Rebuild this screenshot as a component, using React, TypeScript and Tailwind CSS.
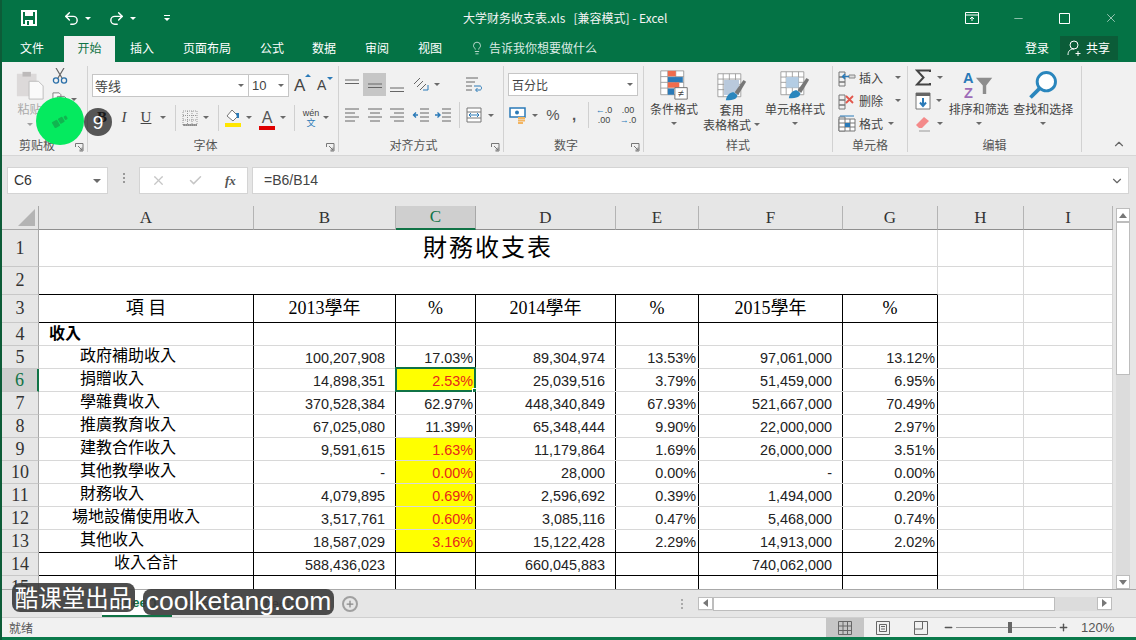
import React from "react"
import { Undo2, Redo2, Lightbulb, Check, X, Minus, Plus, ChevronDown } from "lucide-react"

const rows = [
  { n: 5, a: "政府補助收入", b: "100,207,908", c: "17.03%", d: "89,304,974", e: "13.53%", f: "97,061,000", g: "13.12%" },
  { n: 6, a: "捐贈收入", b: "14,898,351", c: "2.53%", d: "25,039,516", e: "3.79%", f: "51,459,000", g: "6.95%" },
  { n: 7, a: "學雜費收入", b: "370,528,384", c: "62.97%", d: "448,340,849", e: "67.93%", f: "521,667,000", g: "70.49%" },
  { n: 8, a: "推廣教育收入", b: "67,025,080", c: "11.39%", d: "65,348,444", e: "9.90%", f: "22,000,000", g: "2.97%" },
  { n: 9, a: "建教合作收入", b: "9,591,615", c: "1.63%", d: "11,179,864", e: "1.69%", f: "26,000,000", g: "3.51%" },
  { n: 10, a: "其他教學收入", b: "-", c: "0.00%", d: "28,000", e: "0.00%", f: "-", g: "0.00%" },
  { n: 11, a: "財務收入", b: "4,079,895", c: "0.69%", d: "2,596,692", e: "0.39%", f: "1,494,000", g: "0.20%" },
  { n: 12, a: "場地設備使用收入", b: "3,517,761", c: "0.60%", d: "3,085,116", e: "0.47%", f: "5,468,000", g: "0.74%" },
  { n: 13, a: "其他收入", b: "18,587,029", c: "3.16%", d: "15,122,428", e: "2.29%", f: "14,913,000", g: "2.02%" },
]
const yellowRows = [6, 9, 10, 11, 12, 13]
const cols = ["A", "B", "C", "D", "E", "F", "G", "H", "I"]
const gridCols = "grid grid-cols-[37px_215px_142px_80px_140px_83px_144px_95px_86px_89px]"
const cjk = "font-['Liberation_Serif','Noto_Sans_CJK_TC',serif]"

function Caret({ className = "" }: { className?: string }) {
  return <span className={`inline-block h-0 w-0 border-x-[3px] border-t-[3px] border-x-transparent border-t-[#6a6a6a] ${className}`} />
}

function Sep() {
  return <span className="h-[26px] w-px bg-[#d0d0d0]" />
}

function Launcher() {
  return (
    <svg width="9" height="9" viewBox="0 0 9 9" className="absolute right-[3px] top-[8px]">
      <path d="M.5 4V.5H8V8H4.5M3 3l4 4M7 4.5V7H4.5" fill="none" stroke="#777" />
    </svg>
  )
}

function Group({ width, label, launcher, children }: { width: string; label: string; launcher?: boolean; children: React.ReactNode }) {
  return (
    <div className={`flex h-[86px] shrink-0 flex-col border-r border-[#d2d2d2] ${width}`}>
      <div className="h-[69px] shrink-0">{children}</div>
      <div className={`relative flex h-[19px] shrink-0 items-center justify-center text-[12px] text-[#555] ${launcher ? "pr-[15px]" : ""}`}>
        {label}
        {launcher && <Launcher />}
      </div>
    </div>
  )
}

function Lines({ kind }: { kind: "top" | "mid" | "bot" | "left" | "center" | "right" | "out" | "in" }) {
  const d: Record<string, string> = {
    top: "M2 4h14M2 7.5h14",
    mid: "M2 8h14M2 11.5h14",
    bot: "M2 12h14M2 15.5h14",
    left: "M2 3h14M2 7h10M2 11h14M2 15h10",
    center: "M2 3h14M4 7h10M2 11h14M4 15h10",
    right: "M2 3h14M6 7h10M2 11h14M6 15h10",
    out: "M8 3h9M8 7h9M8 11h9M8 15h9",
    in: "M8 3h9M8 7h9M8 11h9M8 15h9",
  }
  return (
    <svg width="18" height="18" viewBox="0 0 18 18">
      <path d={d[kind]} stroke="#666" fill="none" />
      {kind === "out" && <path d="M1 9h5M4 6.5 1.5 9 4 11.5" stroke="#2a7ab8" strokeWidth="1.4" fill="none" />}
      {kind === "in" && <path d="M1 9h5M3.5 6.5 6 9l-2.5 2.5" stroke="#2a7ab8" strokeWidth="1.4" fill="none" />}
    </svg>
  )
}

function MiniTable({ children }: { children?: React.ReactNode }) {
  return (
    <svg width="30" height="30" viewBox="0 0 34 34">
      <path d="M1 2h26v26H1zM1 8h26M1 14h26M1 20h26M7 2v26M14 2v26M21 2v26" stroke="#9a9a9a" fill="#fff" />
      {children}
      <path d="M20 23 30 9l3 2-9 15z" fill="#777" />
      <path d="M10 32c1-6 5-9 9-9l4 3c0 4-3 6-13 6z" fill="#2a86bd" />
    </svg>
  )
}

function CellIcon({ mark }: { mark: "insert" | "delete" | "format" }) {
  return (
    <svg width="18" height="18" viewBox="0 0 18 18">
      <path d="M1 3h6v5H1zM1 8h6v5H1zM1 13h6v4H1z" fill="none" stroke="#777" />
      {mark === "insert" && (
        <>
          <path d="M11 6h6v3h-6z" fill="#ddd" stroke="#888" />
          <path d="M11 7.5H5M7 5 4.5 7.5 7 10" stroke="#2a7ab8" strokeWidth="1.4" fill="none" />
        </>
      )}
      {mark === "delete" && <path d="m8 4 7 7m0-7-7 7" stroke="#e2574c" strokeWidth="1.8" />}
      {mark === "format" && (
        <>
          <path d="M1 5h16v12H1zM7 5v12M12 5v12M1 9h16M1 13h16" fill="#fff" stroke="#777" />
          <path d="M7 9h5v4H7z" fill="#2a7ab8" />
          <path d="M2 2h14" stroke="#2a7ab8" />
        </>
      )}
    </svg>
  )
}

function Ribbon() {
  return (
    <div className="flex h-[94px] bg-[#f1f1f1] pt-[4px] text-[#444] border-b border-[#d6d6d6]">
      <Group width="w-[86px]" label="剪贴板" launcher>
        <div className="flex pt-[4px]">
          <div className="flex w-[48px] flex-col items-center pl-[7px] text-[#aaa]">
            <svg width="30" height="30" viewBox="0 0 32 32">
              <path d="M2 4h21v24H2z" fill="#dcd9d9" />
              <path d="M8 2h9v5H8z" fill="#bdbaba" />
              <path d="M15 12h10l5 5v14H15z" fill="#fafafa" stroke="#bbb" />
            </svg>
            <span className="mt-[1px] text-[12px] leading-[16px]">粘贴</span>
            <Caret className="mt-[6px] opacity-60" />
          </div>
          <div className="-mt-[2px] flex flex-1 flex-col pl-[2px]">
            <svg width="16" height="16" viewBox="0 0 16 16">
              <path d="M4 0l6 10M12 0 6 10" stroke="#666" strokeWidth="1.2" fill="none" />
              <circle cx="4" cy="12.500" r="2.600" fill="none" stroke="#2a6fa8" strokeWidth="1.300" />
              <circle cx="12" cy="12.500" r="2.600" fill="none" stroke="#2a6fa8" strokeWidth="1.300" />
            </svg>
            <div className="mt-[8px] flex items-center gap-[3px]">
              <svg width="16" height="15" viewBox="0 0 18 17">
                <path d="M1 1h7l2 2v10H1zM6 5h8l3 3v8H6z" fill="#fbfbfb" stroke="#777" />
              </svg>
              <Caret />
            </div>
          </div>
        </div>
      </Group>

      <Group width="w-[251px]" label="字体" launcher>
        <div className="flex items-center pl-[4px] pt-[7px]">
          <div className="flex h-[23px] w-[157px] items-center justify-between border border-[#c6c6c6] bg-white pl-[2px] pr-[4px] text-[13px]">
            等线
            <Caret />
          </div>
          <div className="flex h-[23px] w-[40px] items-center justify-between border border-l-0 border-[#c6c6c6] bg-white pl-[3px] pr-[4px] font-['Liberation_Sans'] text-[13px]">
            10
            <Caret />
          </div>
          <span className="relative ml-[5px] w-[22px] font-['Liberation_Sans'] text-[17px]">
            A<span className="absolute left-[11px] top-[1px] h-0 w-0 border-x-[3px] border-b-[3px] border-x-transparent border-b-[#2a7ab8]" />
          </span>
          <span className="relative ml-[1px] w-[20px] font-['Liberation_Sans'] text-[14px]">
            A<span className="absolute left-[10px] top-[2px] h-0 w-0 border-x-[3px] border-t-[3px] border-x-transparent border-t-[#2a7ab8]" />
          </span>
        </div>
        <div className="mt-[7px] flex h-[24px] items-center pl-[3px] font-['Liberation_Serif'] text-[15px]">
          <span className="flex w-[22px] justify-center font-bold text-black">B</span>
          <span className="flex w-[22px] justify-center italic">I</span>
          <span className="flex w-[22px] justify-center underline">U</span>
          <span className="flex w-[12px] justify-center"><Caret /></span>
          <span className="flex w-[12px] justify-center"><Sep /></span>
          <span className="flex w-[18px] justify-center">
            <svg width="16" height="16" viewBox="0 0 16 16">
              <path d="M1 1h14v14H1zM5.500 1v14M10 1v14M1 5.500h14M1 10h14" fill="none" stroke="#999" strokeDasharray="1 1" />
              <path d="M1 15h14" stroke="#555" />
            </svg>
          </span>
          <span className="flex w-[14px] justify-center"><Caret /></span>
          <span className="flex w-[10px] justify-center"><Sep /></span>
          <span className="flex w-[20px] justify-center">
            <svg width="18" height="18" viewBox="0 0 18 18">
              <path d="m8 1 6 6-5 5-6-5z" fill="#fff" stroke="#777" />
              <path d="M12 4h3v5h-2z" fill="#2a7ab8" />
              <path d="M1 14h16v4H1z" fill="#ffe600" />
            </svg>
          </span>
          <span className="flex w-[12px] justify-center"><Caret /></span>
          <span className="flex w-[24px] justify-center">
            <span className="relative font-['Liberation_Sans'] text-[16px] leading-[18px] text-[#555]">
              A<span className="absolute -left-[3px] -right-[3px] bottom-[-3px] h-[4px] bg-[#e00000]" />
            </span>
          </span>
          <span className="flex w-[8px] justify-center"><Caret /></span>
          <span className="flex w-[14px] justify-center"><Sep /></span>
          <span className="flex w-[20px] flex-col items-center font-['Liberation_Sans'] text-[9px] leading-[9px]">
            wén<span className="font-['Noto_Sans_CJK_SC'] text-[#2a7ab8]">文</span>
          </span>
          <span className="flex w-[10px] justify-center"><Caret /></span>
        </div>
      </Group>

      <Group width="w-[165px]" label="对齐方式" launcher>
        <div className="flex items-center pl-[2px] pt-[7px]">
          <span className="flex h-[23px] w-[22px] items-center justify-center"><Lines kind="top" /></span>
          <span className="flex h-[23px] w-[23px] items-center justify-center bg-[#c6c6c6]"><Lines kind="mid" /></span>
          <span className="flex h-[23px] w-[22px] items-center justify-center"><Lines kind="bot" /></span>
          <span className="ml-[2px] flex w-[22px] justify-center">
            <svg width="18" height="18" viewBox="0 0 18 18">
              <path d="m2 8 6-6M5 11l6-6M8 14l6-6" stroke="#666" fill="none" />
              <path d="M11 14h5M16 9v5" stroke="#2a7ab8" fill="none" />
            </svg>
          </span>
          <span className="flex w-[10px] justify-center"><Caret /></span>
          <span className="ml-[22px] flex w-[20px] justify-center">
            <svg width="18" height="18" viewBox="0 0 18 18">
              <path d="M1 2h12M1 6h9M1 10h6M1 14h6" stroke="#666" fill="none" />
              <path d="M9 10h6c2 0 2 4 0 4h-4M12.500 12 10.500 14l2 2" stroke="#2a7ab8" fill="none" />
            </svg>
          </span>
        </div>
        <div className="mt-[7px] flex h-[24px] items-center pl-[2px]">
          <span className="flex w-[22px] justify-center"><Lines kind="left" /></span>
          <span className="flex w-[23px] justify-center"><Lines kind="center" /></span>
          <span className="flex w-[22px] justify-center"><Lines kind="right" /></span>
          <span className="ml-[2px] flex w-[22px] justify-center"><Lines kind="out" /></span>
          <span className="flex w-[22px] justify-center"><Lines kind="in" /></span>
          <span className="flex w-[10px] justify-center"><Sep /></span>
          <span className="flex w-[20px] justify-center">
            <svg width="16" height="16" viewBox="0 0 16 16">
              <path d="M1 1h14v14H1zM1 5h14M1 11h14" fill="#fff" stroke="#777" />
              <path d="M3 8h10M5 6 3 8l2 2M11 6l2 2-2 2" stroke="#2a7ab8" fill="none" />
            </svg>
          </span>
          <span className="flex w-[14px] justify-center"><Caret /></span>
        </div>
      </Group>

      <Group width="w-[140px]" label="数字" launcher>
        <div className="pl-[4px] pt-[7px]">
          <div className="flex h-[23px] w-[130px] items-center justify-between border border-[#c6c6c6] bg-white pl-[3px] pr-[4px] text-[12px]">
            百分比
            <Caret />
          </div>
        </div>
        <div className="mt-[7px] flex h-[24px] items-center pl-[5px] font-['Liberation_Sans']">
          <span className="flex w-[18px] justify-center">
            <svg width="18" height="18" viewBox="0 0 18 18">
              <path d="M1 2h15v9H1z" fill="#fff" stroke="#2a7ab8" strokeWidth="1.5" />
              <circle cx="8" cy="6.500" r="2" fill="#2a7ab8" />
              <path d="M9 12h7M9 14.500h7M9 17h5" stroke="#f3b562" strokeWidth="2" />
            </svg>
          </span>
          <span className="flex w-[16px] justify-center"><Caret /></span>
          <span className="flex w-[20px] justify-center text-[15px] text-[#555]">%</span>
          <span className="flex w-[22px] justify-center text-[15px] font-bold text-[#555]">,</span>
          <span className="flex w-[6px] justify-center"><Sep /></span>
          <span className="flex w-[26px] flex-col items-center text-[9px] leading-[10px]">
            <span><span className="text-[#2a7ab8]">←</span>.0</span>.00
          </span>
          <span className="flex w-[22px] flex-col items-center text-[9px] leading-[10px]">
            .00<span><span className="text-[#2a7ab8]">→</span>.0</span>
          </span>
        </div>
      </Group>

      <Group width="w-[189px]" label="样式">
        <div className="flex text-[12px] leading-[15px]">
          <div className="flex w-[60px] flex-col items-center pt-[4px]">
            <svg width="30" height="30" viewBox="0 0 32 34">
              <path d="M1 1h26v27H1zM1 7.500h26M1 14h26M1 20.500h26M9 1v27M18 1v27" fill="#fff" stroke="#999" />
              <path d="M9 1h9v6H9z" fill="#ef6c4d" />
              <path d="M9 8h17v6H9z" fill="#2a7ab8" />
              <path d="M9 14h13v6H9z" fill="#ef6c4d" />
              <path d="M9 21h7v7H9z" fill="#2a7ab8" />
              <path d="M17 20h14v13H17z" fill="#fff" stroke="#666" />
              <text x="24" y="31" textAnchor="middle" fontSize="12" fill="#444" fontFamily="Liberation Sans">≠</text>
            </svg>
            <span className="mt-[1px]">条件格式</span>
            <Caret className="mt-[6px]" />
          </div>
          <div className="flex w-[55px] flex-col items-center pt-[6px]">
            <MiniTable><path d="M8 9h17v17H8z" fill="#b9c9dc" /></MiniTable>
            <span>套用</span>
            <span className="flex items-center gap-[3px] whitespace-nowrap">表格格式<Caret /></span>
          </div>
          <div className="flex w-[72px] flex-col items-center pt-[4px]">
            <MiniTable><path d="M7 8h14v12H7z" fill="#b4cde4" /></MiniTable>
            <span className="mt-[1px] whitespace-nowrap">单元格样式</span>
            <Caret className="mt-[6px]" />
          </div>
        </div>
      </Group>

      <Group width="w-[75px]" label="单元格">
        <div className="flex flex-col pl-[5px] text-[12px] leading-[23px]">
          <div className="flex h-[23px] items-center gap-[3px]"><CellIcon mark="insert" />插入<Caret className="ml-[9px]" /></div>
          <div className="flex h-[23px] items-center gap-[3px]"><CellIcon mark="delete" />删除<Caret className="ml-[9px]" /></div>
          <div className="flex h-[22px] items-center gap-[3px]"><CellIcon mark="format" />格式<Caret className="ml-[2px]" /></div>
        </div>
      </Group>

      <Group width="w-[174px]" label="编辑">
        <div className="flex text-[12px] leading-[15px]">
          <div className="flex w-[44px] flex-col items-start pl-[7px]">
            <div className="flex h-[23px] items-center gap-[5px]">
              <svg width="17" height="17" viewBox="0 0 17 17"><path d="M15 3V1.500H2L8.500 8.500 2 15.500h13V14" fill="none" stroke="#444" strokeWidth="2" /></svg>
              <Caret />
            </div>
            <div className="flex h-[23px] items-center gap-[5px]">
              <svg width="16" height="18" viewBox="0 0 16 18"><path d="M1 1h14v16H1z" fill="#fff" stroke="#777" /><path d="M1 1h14v3H1z" fill="#666" /><path d="M8 6v8M5 10.500 8 14l3-3.500" stroke="#2a7ab8" strokeWidth="2" fill="none" /></svg>
              <Caret />
            </div>
            <div className="flex h-[23px] items-center gap-[5px]">
              <svg width="17" height="17" viewBox="0 0 17 17"><path d="m1 10 8-8 5 4-7 7H4z" fill="#f48a8a" /><path d="M4 16h11" stroke="#999" /></svg>
              <Caret />
            </div>
          </div>
          <div className="flex w-[54px] flex-col items-center pt-[4px]">
            <svg width="31" height="30" viewBox="0 0 36 35" fontFamily="Liberation Sans" fontWeight="bold" fontSize="17">
              <text x="0" y="15" fill="#2a7ab8">A</text>
              <text x="1" y="33" fill="#9d6cb8">Z</text>
              <path d="M15 9h19l-7 9v10h-4V18z" fill="#8d8d8d" />
            </svg>
            <span className="mt-[1px] whitespace-nowrap">排序和筛选</span>
            <Caret className="mt-[6px]" />
          </div>
          <div className="flex w-[76px] flex-col items-center pt-[4px]">
            <svg width="30" height="30" viewBox="0 0 36 36">
              <circle cx="22" cy="14" r="11" fill="#fff" stroke="#2a86bd" strokeWidth="3.500" />
              <path d="m14 22-11 11" stroke="#2a86bd" strokeWidth="4.500" />
            </svg>
            <span className="mt-[1px] whitespace-nowrap">查找和选择</span>
            <Caret className="mt-[6px]" />
          </div>
        </div>
      </Group>

      <div className="flex flex-1 items-end justify-end pb-[4px] pr-[10px]">
        <ChevronDown size={14} strokeWidth={2} className="rotate-180 text-[#666]" />
      </div>
    </div>
  )
}

function Num({ v, pct, red }: { v?: string; pct?: boolean; red?: boolean }) {
  return (
    <div className={`flex h-full items-end justify-end border-r border-black font-['Liberation_Sans'] text-[14.4px] leading-[20px] ${pct ? "pr-[2px]" : "pr-[10px]"} ${red ? "text-[#e8261a]" : "text-[#222]"}`}>
      {v}
    </div>
  )
}

function RowHead({ n, active }: { n: number; active?: boolean }) {
  return (
    <div className={`flex items-center justify-center border-b border-[#c8c8c8] font-['Liberation_Serif'] text-[18px] ${active ? "border-r-2 border-r-[#107346] bg-[#cfcfcf] text-[#107346]" : "border-r border-r-[#a8a8a8] bg-[#e6e6e6] text-[#333]"}`}>
      {n}
    </div>
  )
}

function GridTail() {
  return (
    <>
      <div className="border-r border-b border-[#d8d8d8]" />
      <div className="border-r border-b border-[#d8d8d8]" />
    </>
  )
}

function Sheet() {
  return (
    <div className={`${gridCols} h-[383px] w-[1111px] shrink-0 grid-rows-[24px_37px_28px_28px_repeat(12,23px)] overflow-hidden bg-white text-black`}>
      <div className="flex items-end justify-end border-r border-b border-[#a8a8a8] bg-[#e6e6e6] p-[3px]">
        <span className="h-0 w-0 border-b-[17px] border-l-[17px] border-b-[#b4b4b4] border-l-transparent" />
      </div>
      {cols.map((c) => (
        <div
          key={c}
          className={`flex items-center justify-center border-r font-['Liberation_Serif'] text-[17px] ${
            c === "C" ? "border-b-2 border-b-[#107346] border-r-[#a8a8a8] bg-[#cfcfcf] text-[#107346]" : "border-b border-b-[#8f8f8f] border-r-[#b4b4b4] bg-[#e6e6e6] text-[#333]"
          }`}
        >
          {c}
        </div>
      ))}

      <RowHead n={1} />
      <div className={`col-span-7 flex items-center justify-center border-r border-b border-[#d8d8d8] text-[24px] tracking-[2px] ${cjk}`}>財務收支表</div>
      <GridTail />

      <RowHead n={2} />
      <div className="col-span-7 border-r border-b border-r-[#d8d8d8] border-b-black" />
      <GridTail />

      <RowHead n={3} />
      {["項 目", "2013學年", "%", "2014學年", "%", "2015學年", "%"].map((t, i) => (
        <div key={i} className={`flex items-center justify-center border-r border-b border-black text-[18px] ${cjk}`}>{t}</div>
      ))}
      <GridTail />

      <RowHead n={4} />
      <div className={`flex items-center border-r border-b border-r-black border-b-[#d8d8d8] pl-[10px] text-[16px] font-bold ${cjk}`}>收入</div>
      {[0, 1, 2, 3, 4, 5].map((i) => <div key={i} className="border-r border-b border-r-black border-b-[#d8d8d8]" />)}
      <GridTail />

      {rows.map((r) => {
        const hot = yellowRows.includes(r.n)
        const last = r.n === 13
        const line = last ? "border-b-black" : "border-b-[#d8d8d8]"
        return (
          <React.Fragment key={r.n}>
            <RowHead n={r.n} active={r.n === 6} />
            <div className={`flex items-center whitespace-nowrap border-r border-b border-r-black ${line} ${r.n === 12 ? "pl-[33px]" : "pl-[41px]"} pb-[2px] text-[16px] ${cjk}`}>{r.a}</div>
            <div className={`border-b ${line}`}><Num v={r.b} /></div>
            <div className={`relative border-b ${line} ${hot ? "bg-[#ffff00]" : ""}`}>
              <Num v={r.c} pct red={hot} />
              {r.n === 6 && (
                <div className="absolute -left-px -top-[2px] h-[25px] w-[81px] border-2 border-[#107346]">
                  <span className="absolute -bottom-[3px] -right-[3px] h-[5px] w-[5px] border border-white bg-[#107346]" />
                </div>
              )}
            </div>
            <div className={`border-b ${line}`}><Num v={r.d} /></div>
            <div className={`border-b ${line}`}><Num v={r.e} pct /></div>
            <div className={`border-b ${line}`}><Num v={r.f} /></div>
            <div className={`border-b ${line}`}><Num v={r.g} pct /></div>
            <GridTail />
          </React.Fragment>
        )
      })}

      <RowHead n={14} />
      <div className={`flex items-center justify-center border-r border-b border-black pb-[3px] text-[16px] ${cjk}`}>收入合計</div>
      <div className="border-b border-black"><Num v="588,436,023" /></div>
      <div className="border-b border-black"><Num /></div>
      <div className="border-b border-black"><Num v="660,045,883" /></div>
      <div className="border-b border-black"><Num /></div>
      <div className="border-b border-black"><Num v="740,062,000" /></div>
      <div className="border-b border-black"><Num /></div>
      <GridTail />

      <RowHead n={15} />
      {[0, 1, 2, 3, 4, 5, 6].map((i) => <div key={i} className="border-r border-black" />)}
      <GridTail />
    </div>
  )
}

function ArrowBtn({ dir }: { dir: "up" | "down" | "left" | "right" }) {
  const shape = {
    up: "border-x-[4px] border-b-[5px] border-x-transparent border-b-[#777]",
    down: "border-x-[4px] border-t-[5px] border-x-transparent border-t-[#777]",
    left: "border-y-[4px] border-r-[5px] border-y-transparent border-r-[#777]",
    right: "border-y-[4px] border-l-[5px] border-y-transparent border-l-[#777]",
  }[dir]
  const size = dir === "up" || dir === "down" ? "h-[14px] w-[14px]" : "h-[13px] w-[15px]"
  return (
    <span className={`flex shrink-0 items-center justify-center border border-[#bdbdbd] bg-white ${size}`}>
      <span className={`h-0 w-0 ${shape}`} />
    </span>
  )
}

export default function App() {
  return (
    <div className="relative h-[640px] w-[1136px] overflow-hidden border-l-2 border-[#0d5c38] bg-[#e6e6e6] font-['Noto_Sans_CJK_SC','Liberation_Sans',sans-serif]">
      {/* title bar */}
      <div className="flex h-[36px] items-center bg-[#047345] text-white">
        <svg width="16" height="16" viewBox="0 0 16 16" className="ml-[19px]">
          <path d="M1 1h14v14H1z" fill="none" stroke="#fff" strokeWidth="2" />
          <path d="M4 1h8v5H4zM4 10h8v5H4z" fill="#fff" />
          <path d="M6 11h2v4H6z" fill="#047345" />
        </svg>
        <Undo2 size={17} strokeWidth={2} className="ml-[26px]" />
        <Caret className="ml-[5px] border-t-white" />
        <Redo2 size={17} strokeWidth={2} className="ml-[17px]" />
        <Caret className="ml-[5px] border-t-white" />
        <span className="ml-[28px] flex flex-col items-center gap-[2px]">
          <span className="h-px w-[6px] bg-white" />
          <Caret className="border-t-white" />
        </span>
        <span className="ml-[293px] w-[210px] whitespace-nowrap text-[12px] text-[#f4f4f4]">大学财务收支表.xls&nbsp;&nbsp; [兼容模式] - Excel</span>
        <svg width="14" height="12" viewBox="0 0 14 12" className="ml-[292px]">
          <path d="M.5.500h13v11H.500zM.5 3h13M5 7l2-2 2 2M7 5v4" fill="none" stroke="#fff" />
        </svg>
        <Minus size={13} strokeWidth={1} className="ml-[33px]" />
        <svg width="11" height="11" viewBox="0 0 11 11" className="ml-[34px]"><path d="M.5.500h10v10H.500z" fill="none" stroke="#fff" /></svg>
        <X size={14} strokeWidth={1} className="ml-[34px]" />
      </div>

      {/* tabs */}
      <div className="flex h-[26px] bg-[#047345] text-[12px] leading-[24px] text-white">
        <span className="ml-[18px] w-[44px]">文件</span>
        <span className="w-[51px] bg-[#f1f1f1] text-center text-[#107346]">开始</span>
        <span className="ml-[15px] w-[52px]">插入</span>
        <span className="w-[77px] pl-[1px]">页面布局</span>
        <span className="w-[53px] pl-[1px]">公式</span>
        <span className="w-[53px]">数据</span>
        <span className="w-[53px]">审阅</span>
        <span className="w-[32px]">视图</span>
        <Lightbulb size={14} strokeWidth={1.2} className="ml-[20px] mt-[5px]" />
        <span className="ml-[5px] w-[108px] text-[#dcebe4]">告诉我你想要做什么</span>
        <span className="ml-[428px] w-[34px]">登录</span>
        <span className="ml-[1px] flex h-[24px] w-[58px] items-center gap-[3px] bg-[#0b5c38] pl-[7px]">
          <svg width="16" height="18" viewBox="0 0 16 18"><circle cx="7" cy="6" r="4" fill="none" stroke="#fff" /><path d="M1 16c0-4 2-6 6-6M11 12v5M8.500 14.500h5" fill="none" stroke="#fff" /></svg>
          共享
        </span>
      </div>

      <Ribbon />

      {/* formula bar */}
      <div className="flex h-[50px] items-start pl-[5px] pt-[11px]">
        <div className="flex h-[27px] w-[101px] items-center justify-between border border-[#d4d4d4] bg-white pl-[6px] pr-[6px] font-['Liberation_Sans'] text-[14px] text-[#333]">
          C6
          <Caret className="border-x-[4px] border-t-[4px]" />
        </div>
        <span className="ml-[15px] mt-[6px] flex flex-col gap-[2px]">
          <span className="h-[2px] w-[2px] bg-[#999]" />
          <span className="h-[2px] w-[2px] bg-[#999]" />
          <span className="h-[2px] w-[2px] bg-[#999]" />
        </span>
        <div className="ml-[14px] flex h-[27px] w-[109px] items-center border border-[#d4d4d4] bg-white pl-[11px]">
          <X size={15} strokeWidth={2} className="text-[#c6c6c6]" />
          <Check size={15} strokeWidth={2.4} className="ml-[22px] text-[#c6c6c6]" />
          <span className="ml-[22px] font-['Liberation_Serif'] text-[13px] font-bold italic text-[#555]">fx</span>
        </div>
        <div className="ml-[4px] flex h-[27px] w-[877px] items-center justify-between border border-[#d4d4d4] bg-white pl-[11px] pr-[4px] font-['Liberation_Sans'] text-[14px] text-[#444]">
          =B6/B14
          <ChevronDown size={14} className="text-[#666]" />
        </div>
      </div>

      {/* sheet + vertical scrollbar */}
      <div className="flex h-[383px]">
        <Sheet />
        <div className="flex flex-1 flex-col pl-[3px] pr-[6px] pt-[2px]">
          <ArrowBtn dir="up" />
          <div className="flex-1 bg-[#dcdcdc]">
            <div className="h-[153px] border border-[#bdbdbd] bg-white" />
          </div>
          <ArrowBtn dir="down" />
        </div>
      </div>

      {/* sheet tabs */}
      <div className="flex h-[28px] items-center border-t border-[#a8a8a8] font-['Liberation_Sans'] text-[13px] text-[#444]">
        <div className="ml-[100px] flex h-full w-[70px] items-center justify-center border-b-2 border-[#107346] bg-white font-bold text-[#107346]">Sheet1</div>
        <div className="flex w-[70px] justify-center border-r border-[#bbb]">Sheet2</div>
        <div className="flex w-[70px] justify-center border-r border-[#bbb]">Sheet3</div>
        <span className="ml-[30px] flex h-[16px] w-[16px] items-center justify-center rounded-full border-2 border-[#a0a0a0]">
          <Plus size={10} strokeWidth={3} className="text-[#888]" />
        </span>
        <span className="ml-[323px] flex flex-col gap-[2px]">
          <span className="h-[2px] w-[2px] bg-[#aaa]" />
          <span className="h-[2px] w-[2px] bg-[#aaa]" />
          <span className="h-[2px] w-[2px] bg-[#aaa]" />
        </span>
        <div className="ml-[15px] flex h-[14px] w-[414px] bg-[#dcdcdc]">
          <ArrowBtn dir="left" />
          <div className="h-full w-[342px] border border-[#bdbdbd] bg-white" />
          <div className="flex-1" />
          <ArrowBtn dir="right" />
        </div>
      </div>

      {/* status bar */}
      <div className="flex h-[20px] items-center border-t border-[#cfcfcf] bg-[#f1f1f1] text-[12px] text-[#555]">
        <span className="ml-[7px] w-[817px]">就绪</span>
        <span className="flex h-full w-[38px] items-center justify-center bg-[#c6c6c6]">
          <svg width="14" height="14" viewBox="0 0 14 14"><path d="M.5.500h13v13H.500zM5 .5v13M9.500.5v13M.5 5h13M.5 9.500h13" fill="none" stroke="#666" /></svg>
        </span>
        <span className="flex w-[38px] justify-center">
          <svg width="14" height="14" viewBox="0 0 14 14"><path d="M.5.500h13v13H.500zM3.500 3.500h7v7h-7zM5 5.500h4M5 8h4" fill="none" stroke="#666" /></svg>
        </span>
        <span className="flex w-[38px] justify-center">
          <svg width="14" height="14" viewBox="0 0 14 14"><path d="M.5.500h13v13H.500zM.5 8h8V.5" fill="none" stroke="#666" /></svg>
        </span>
        <Minus size={11} strokeWidth={3} className="ml-[3px] text-[#555]" />
        <div className="relative ml-[2px] h-px w-[100px] bg-[#999]">
          <span className="absolute -top-[5px] left-[52px] h-[11px] w-[4px] bg-[#666]" />
        </div>
        <Plus size={11} strokeWidth={3} className="ml-[2px] text-[#555]" />
        <span className="ml-[12px] font-['Liberation_Sans'] text-[13px]">120%</span>
      </div>
      <div className="h-[3px] bg-[#0b7a4b]" />

      {/* recording overlays */}
      <div className="absolute left-[34px] top-[97px] flex h-[48px] w-[48px] items-center justify-center rounded-full bg-[#05ea5f]">
        <svg width="18" height="14" viewBox="0 0 18 14">
          <g fill="#10b650" transform="rotate(-30 9 7)">
            <rect x="1" y="4" width="6" height="7" rx="1" />
            <rect x="8" y="4" width="5" height="6" rx="1" />
            <rect x="14" y="5" width="3" height="4" rx="1" />
          </g>
        </svg>
      </div>
      <div className="absolute left-[82px] top-[108px] flex h-[28px] w-[28px] items-center justify-center rounded-full bg-[#222]/75 pt-[3px] font-['Liberation_Sans'] text-[19px] text-white">9</div>
      <div className="absolute left-[10px] top-[583px] flex h-[29px] w-[123px] items-center justify-center rounded-[8px] bg-[#3a3a3a]/90 text-[23.5px] leading-none text-white">酷课堂出品</div>
      <div className="absolute left-[141px] top-[589px] flex h-[26px] w-[191px] items-center justify-center rounded-[8px] bg-[#3a3a3a]/90 pb-[2px] font-['Liberation_Sans'] text-[26.5px] leading-none text-white">coolketang.com</div>
    </div>
  )
}
